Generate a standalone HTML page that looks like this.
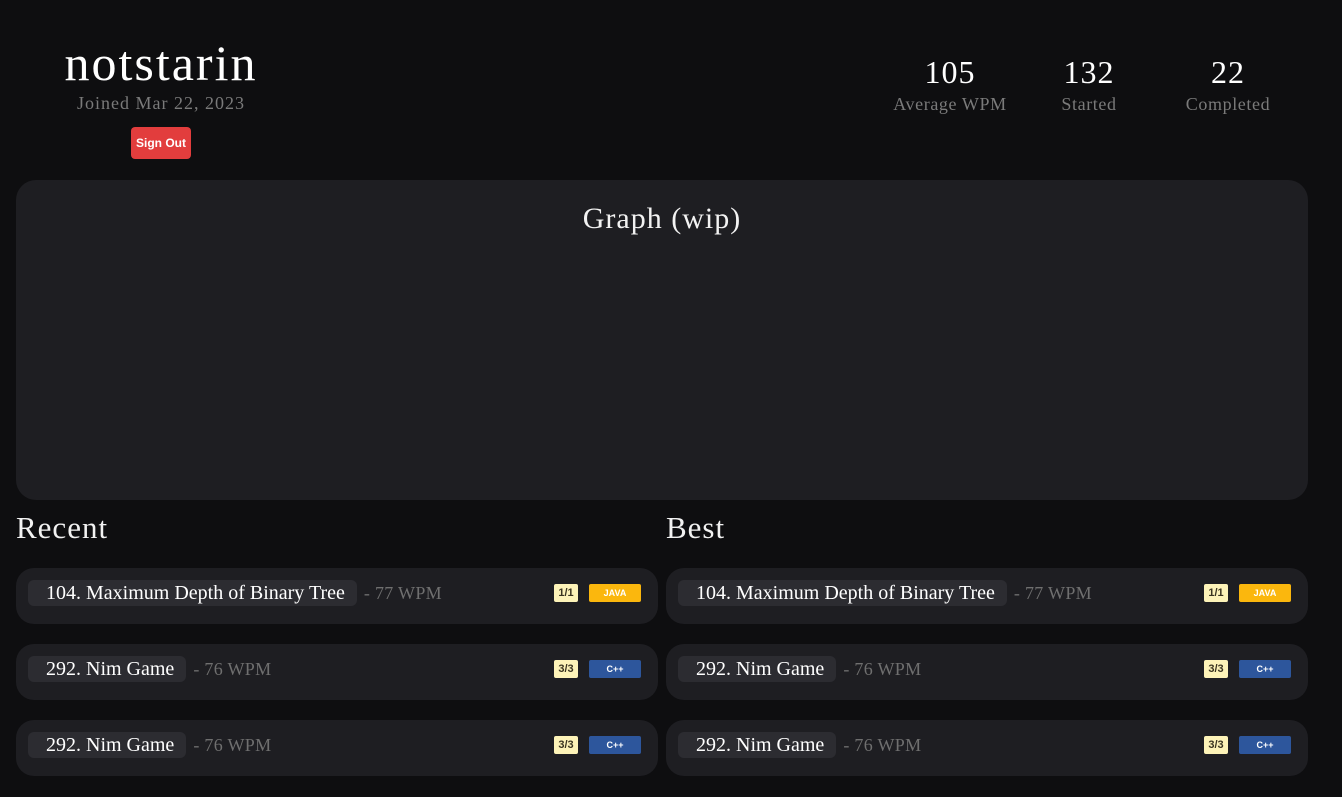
<!DOCTYPE html>
<html><head><style>
*{margin:0;padding:0;box-sizing:border-box}
body{width:1342px;height:797px;background:#0e0e10;font-family:"Liberation Serif",serif;color:#f2f2f2;position:relative;overflow:hidden}
.abs{position:absolute}
.name{left:0;width:322px;top:34px;text-align:center;font-size:50px;letter-spacing:2px;color:#fff}
.joined{left:0;width:322px;top:93px;text-align:center;font-size:18px;letter-spacing:1px;color:#7a7a7a}
.so{left:131px;top:127px;width:60px;height:32px;background:#e23d3d;border-radius:4px;color:#fff;font:bold 12px "Liberation Sans",sans-serif;text-align:center;line-height:32px}
.stat{text-align:center}
.stat .n{font-size:32px;letter-spacing:1px;color:#fff;line-height:34px}
.stat .l{font-size:18px;letter-spacing:0.6px;color:#7a7a7a;margin-top:5px}
.graph{left:16px;top:180px;width:1292px;height:320px;background:#1e1e22;border-radius:20px;text-align:center;font-size:30px;letter-spacing:1px;padding-top:22px}
.h{font-size:31px;letter-spacing:1px;top:510px}
.row{height:56px;background:#1e1e22;border-radius:18px;display:flex;align-items:flex-start;padding:12px 0 0 12px}
.pill{height:26px;background:#2c2c31;border-radius:6px;padding:0 12px 0 18px;font-size:20px;line-height:26px;color:#fff}
.wpm{margin-left:7px;font-size:18px;line-height:26px;letter-spacing:0.3px;color:#6f6f6f}
.frac{position:absolute;left:538px;top:16px;width:24px;height:18px;background:#fdf3b8;color:#3a3420;font:bold 11px "Liberation Sans",sans-serif;text-align:center;line-height:18px;border-radius:2px}
.lang{position:absolute;left:573px;top:16px;width:52px;height:18px;color:#fff;font:bold 9px "Liberation Sans",sans-serif;text-align:center;line-height:18px;border-radius:2px}
.java{background:#fbb70d}.cpp{background:#2d569c}
</style></head><body>
<div class="abs name">notstarin</div>
<div class="abs joined">Joined Mar 22, 2023</div>
<div class="abs so">Sign Out</div>
<div class="abs stat" style="left:880px;width:140px;top:55px"><div class="n">105</div><div class="l">Average WPM</div></div>
<div class="abs stat" style="left:1029px;width:120px;top:55px"><div class="n">132</div><div class="l">Started</div></div>
<div class="abs stat" style="left:1168px;width:120px;top:55px"><div class="n">22</div><div class="l">Completed</div></div>
<div class="abs graph">Graph (wip)</div>
<div class="abs h" style="left:16px">Recent</div>
<div class="abs h" style="left:666px">Best</div>

<div class="abs row" style="left:16px;top:568px;width:642px"><div class="pill">104. Maximum Depth of Binary Tree</div><div class="wpm">- 77 WPM</div><div class="frac">1/1</div><div class="lang java">JAVA</div></div>
<div class="abs row" style="left:16px;top:644px;width:642px"><div class="pill">292. Nim Game</div><div class="wpm">- 76 WPM</div><div class="frac">3/3</div><div class="lang cpp">C++</div></div>
<div class="abs row" style="left:16px;top:720px;width:642px"><div class="pill">292. Nim Game</div><div class="wpm">- 76 WPM</div><div class="frac">3/3</div><div class="lang cpp">C++</div></div>

<div class="abs row" style="left:666px;top:568px;width:642px"><div class="pill">104. Maximum Depth of Binary Tree</div><div class="wpm">- 77 WPM</div><div class="frac">1/1</div><div class="lang java">JAVA</div></div>
<div class="abs row" style="left:666px;top:644px;width:642px"><div class="pill">292. Nim Game</div><div class="wpm">- 76 WPM</div><div class="frac">3/3</div><div class="lang cpp">C++</div></div>
<div class="abs row" style="left:666px;top:720px;width:642px"><div class="pill">292. Nim Game</div><div class="wpm">- 76 WPM</div><div class="frac">3/3</div><div class="lang cpp">C++</div></div>
</body></html>
